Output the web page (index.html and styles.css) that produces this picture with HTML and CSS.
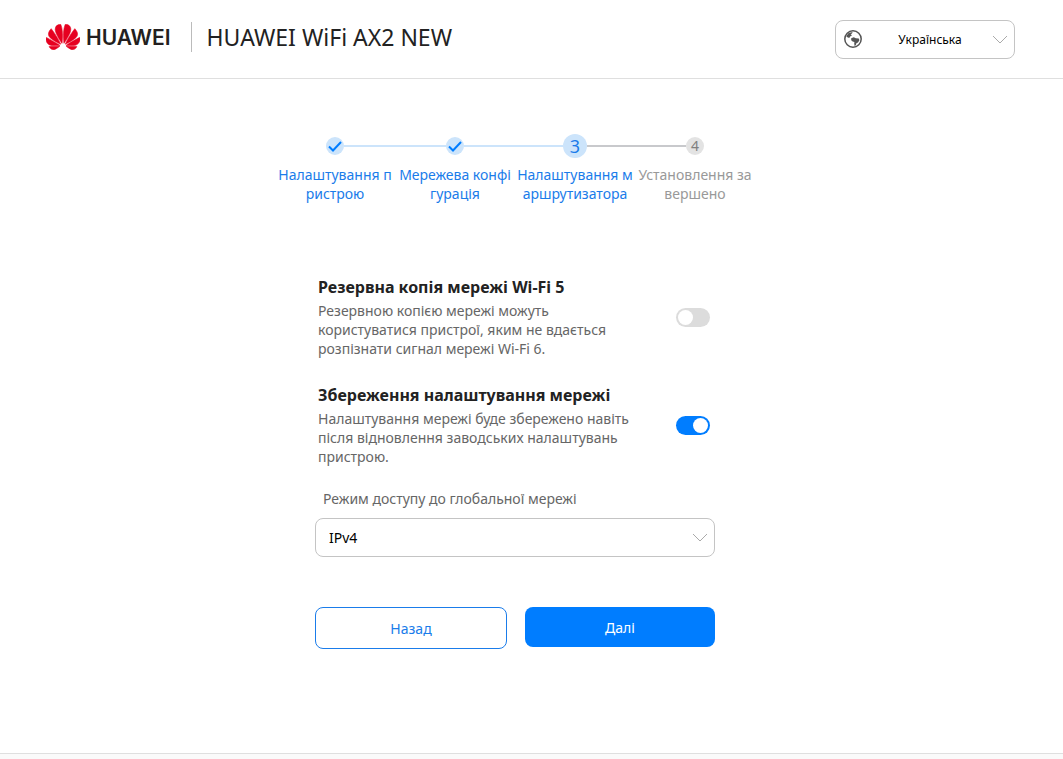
FILE: index.html
```html
<!DOCTYPE html>
<html lang="uk">
<head>
    <meta charset="UTF-8">
    <meta name="viewport" content="width=device-width, initial-scale=1.0">
    <title>HUAWEI WiFi AX2 NEW</title>
    <link rel="stylesheet" href="styles.css">
</head>
<body>
    <header class="header">
        <div class="brand">
            <svg class="brand-mark" viewBox="0 3 24 18" aria-hidden="true">
                <path d="M3.67 6.14S1.82 7.91 1.72 9.78v.35c.08 1.51 1.22 2.4 1.22 2.4 1.83 1.79 6.26 4.04 7.3 4.55 0 0 .06.03.1-.01l.02-.04v-.04C7.52 10.8 3.67 6.14 3.67 6.14zM9.65 18.6c-.02-.08-.1-.08-.1-.08l-7.38.26c.8 1.43 2.15 2.53 3.56 2.2.96-.25 3.16-1.78 3.88-2.3.06-.05.04-.09.04-.09zm.08-.78C6.49 15.63.21 12.28.21 12.28c-.15.46-.2.9-.21 1.3v.07c0 1.07.4 1.82.4 1.82.8 1.69 2.34 2.2 2.34 2.2.7.3 1.4.31 1.4.31.12.02 4.4 0 5.54 0 .05 0 .08-.05.08-.05v-.06c0-.03-.03-.05-.03-.05zM9.06 3.19a3.42 3.42 0 0 0-2.57 3.15v.41c.03.6.16 1.05.16 1.05.66 2.9 3.86 7.65 4.55 8.65.05.05.1.03.1.03a.1.1 0 0 0 .06-.1c1.06-10.6-1.11-13.42-1.11-13.42-.32.02-1.19.23-1.19.23zm8.3 2.27s-.49-1.8-2.44-2.28c0 0-.57-.14-1.17-.22 0 0-2.18 2.81-1.12 13.43.01.07.06.08.06.08.07.03.1-.03.1-.03.72-1.03 3.9-5.76 4.55-8.64 0 0 .36-1.4.02-2.34zm-2.92 13.07s-.07 0-.09.05c0 0-.01.07.03.1.7.51 2.85 2 3.88 2.3 0 0 .16.05.43.06h.14c.69-.02 1.9-.37 3-2.26l-7.4-.25zm7.83-8.41c.14-2.06-1.94-3.97-1.94-3.98 0 0-3.85 4.66-6.67 10.8 0 0-.03.08.02.13l.04.01h.06c1.06-.53 5.46-2.77 7.28-4.54 0 0 1.15-.93 1.21-2.42zm1.52 2.14s-6.28 3.37-9.52 5.55c0 0-.05.04-.03.11 0 0 .03.06.07.06 1.16 0 5.56 0 5.67-.02 0 0 .57-.02 1.27-.29 0 0 1.56-.5 2.37-2.27 0 0 .73-1.45.17-3.14z"/>
            </svg>
            <span class="brand-name">HUAWEI</span>
        </div>
        <h1 class="device-name">HUAWEI WiFi AX2 NEW</h1>
        <div class="select-box language">
            <svg class="globe" viewBox="0 0 18 18" aria-hidden="true">
                <circle cx="9" cy="9" r="8.2"/>
                <path d="M2.2 6.2 4.6 3 8.6 1.9 8 3.6 6.6 4.2 8 5.2 6.2 6.4 5.2 8 3.4 7.2zM7.2 8.2l2.6-.9 2 .9 3 .4.6 1.6-1.4 2.4-1.6.6-.6 2-1.2.9-.4-2.4.2-1.6-1.8-.6-1.4-1.2z"/>
            </svg>
            <select aria-label="Мова">
                <option>Українська</option>
            </select>
            <svg class="chevron" viewBox="0 0 16 9" aria-hidden="true"><path d="M1 1l7 7 7-7"/></svg>
        </div>
    </header>

    <main class="wizard">
        <ol class="steps">
            <li class="step done">
                <div class="step-track">
                    <span class="step-dot"><svg viewBox="0 0 18 18" aria-hidden="true"><path d="M3 9.5l4 4L15 5"/></svg></span>
                </div>
                <div class="step-name">Налаштування п<br>ристрою</div>
            </li>
            <li class="step done">
                <div class="step-track">
                    <span class="step-dot"><svg viewBox="0 0 18 18" aria-hidden="true"><path d="M3 9.5l4 4L15 5"/></svg></span>
                </div>
                <div class="step-name">Мережева конфі<br>гурація</div>
            </li>
            <li class="step current">
                <div class="step-track"><span class="step-dot">3</span></div>
                <div class="step-name">Налаштування м<br>аршрутизатора</div>
            </li>
            <li class="step">
                <div class="step-track"><span class="step-dot">4</span></div>
                <div class="step-name">Установлення за<br>вершено</div>
            </li>
        </ol>

        <form class="settings">
            <div class="option">
                <div class="option-text">
                    <label class="option-title" for="wifi5">Резервна копія мережі Wi-Fi 5</label>
                    <p>Резервною копією мережі можуть користуватися пристрої, яким не вдається розпізнати сигнал мережі Wi-Fi 6.</p>
                </div>
                <input class="switch" type="checkbox" id="wifi5">
            </div>
            <div class="option">
                <div class="option-text">
                    <label class="option-title" for="keep">Збереження налаштування мережі</label>
                    <p>Налаштування мережі буде збережено навіть після відновлення заводських налаштувань пристрою.</p>
                </div>
                <input class="switch" type="checkbox" id="keep" checked>
            </div>

            <label class="field-label" for="mode">Режим доступу до глобальної мережі</label>
            <div class="select-box">
                <select id="mode">
                    <option>IPv4</option>
                </select>
                <svg class="chevron" viewBox="0 0 16 9" aria-hidden="true"><path d="M1 1l7 7 7-7"/></svg>
            </div>

            <div class="buttons">
                <button class="btn btn-back" type="button">Назад</button>
                <button class="btn btn-next" type="button">Далі</button>
            </div>
        </form>
    </main>

    <footer class="footer"></footer>
</body>
</html>
```

FILE: styles.css
```css
body {
    font-family: "Segoe UI", "Noto Sans", sans-serif;
    font-size: 14px;
    line-height: 19px;
    color: #666;
    background: #fff;
    margin: 0;
    min-height: 100vh;
    display: flex;
    flex-direction: column;
}

/* header */
.header {
    display: flex;
    align-items: center;
    height: 78px;
    padding: 0 48px 0 46px;
    border-bottom: 1px solid #dfdfdf;
}
.brand {
    display: flex;
    align-items: center;
    gap: 6px;
    margin-bottom: 4px;
    padding-right: 20px;
    height: 30px;
    border-right: 1px solid #bbb;
}
.brand-mark {
    width: 34px;
    height: 26px;
    fill: #e60020;
    stroke: #e60020;
    stroke-width: 0.4;
}
.brand-name {
    font-family: Inter, sans-serif;
    font-size: 21px;
    font-weight: 600;
    color: #231f20;
}
.device-name {
    margin: 0 auto 4px 15px;
    font-size: 23px;
    line-height: 30px;
    font-weight: 400;
    color: #222;
}

/* selects */
.select-box {
    position: relative;
}
.select-box select {
    appearance: none;
    box-sizing: border-box;
    width: 100%;
    height: 39px;
    padding: 0 34px 0 13px;
    border: 1px solid #c4c4c4;
    border-radius: 8px;
    background: #fff;
    font: inherit;
    color: #000;
}
.chevron {
    position: absolute;
    right: 7px;
    top: 15px;
    width: 16px;
    height: 9px;
    fill: none;
    stroke: #aaa;
    pointer-events: none;
}
.language {
    width: 180px;
}
.language select {
    padding: 0 34px 0 44px;
    font-size: 12px;
    text-align: center;
    text-align-last: center;
}
.globe {
    position: absolute;
    left: 9px;
    top: 10px;
    width: 18px;
    height: 18px;
    fill: #555;
    pointer-events: none;
}
.globe circle {
    fill: none;
    stroke: #555;
    stroke-width: 1.5;
}

/* wizard */
.wizard {
    flex: 1;
    display: flex;
    flex-direction: column;
    align-items: center;
    padding: 55px 33px 40px 0;
}
.steps {
    display: flex;
    list-style: none;
    margin: 0;
    padding: 0;
}
.step {
    width: 120px;
    text-align: center;
    color: #999;
}
.step-track {
    display: flex;
    align-items: center;
    height: 24px;
    margin-bottom: 7px;
}
.step-track::before,
.step-track::after {
    content: "";
    flex: 1;
    height: 2px;
    background: #c8c9cc;
}
.step.done .step-track::before,
.step.done .step-track::after,
.step.current .step-track::before {
    background: #cce4fb;
}
.step:first-child .step-track::before,
.step:last-child .step-track::after {
    visibility: hidden;
}
.step-dot {
    width: 18px;
    height: 18px;
    line-height: 18px;
    border-radius: 50%;
    background: #e3e3e3;
    color: #808080;
}
.step-dot svg {
    display: block;
    fill: none;
    stroke: #007dff;
    stroke-width: 2;
}
.step.done,
.step.current {
    color: #1a7cea;
}
.step.done .step-dot {
    background: #cce4fb;
}
.step.current .step-dot {
    width: 24px;
    height: 24px;
    line-height: 24px;
    font-size: 18px;
    background: #cce4fb;
    color: #1a7cea;
}
.step-name {
    white-space: nowrap;
}

/* settings */
.settings {
    width: 400px;
    margin-top: 73px;
}
.option {
    display: flex;
    align-items: center;
    justify-content: space-between;
    padding: 0 5px 0 3px;
}
.option + .option {
    margin-top: 26px;
}
.option-text {
    width: 330px;
}
.option-title {
    display: block;
    margin-bottom: 3px;
    font-size: 16px;
    line-height: 22px;
    font-weight: 700;
    color: #222;
}
.option p {
    margin: 0;
}
.switch {
    appearance: none;
    width: 34px;
    height: 19px;
    margin: 0;
    padding: 2px;
    box-sizing: border-box;
    border-radius: 10px;
    background: #dcdcdc;
    display: flex;
}
.switch::before {
    content: "";
    width: 15px;
    height: 15px;
    border-radius: 50%;
    background: #fff;
}
.switch:checked {
    justify-content: flex-end;
    background: #007dff;
}
.field-label {
    display: block;
    margin: 23px 0 10px;
    padding-left: 8px;
}
.buttons {
    display: flex;
    align-items: flex-start;
    gap: 18px;
    margin-top: 50px;
}
.btn {
    flex: 1 1 190px;
    height: 40px;
    padding: 0;
    box-sizing: content-box;
    border: 0;
    border-radius: 8px;
    font: inherit;
    cursor: pointer;
}
.btn-back {
    border: 1px solid #1a7cea;
    background: #fff;
    color: #1a7cea;
}
.btn-next {
    background: #007dff;
    color: #fff;
}

.footer {
    height: 5px;
    border-top: 1px solid #dfdfdf;
    background: #fafafa;
}
```
